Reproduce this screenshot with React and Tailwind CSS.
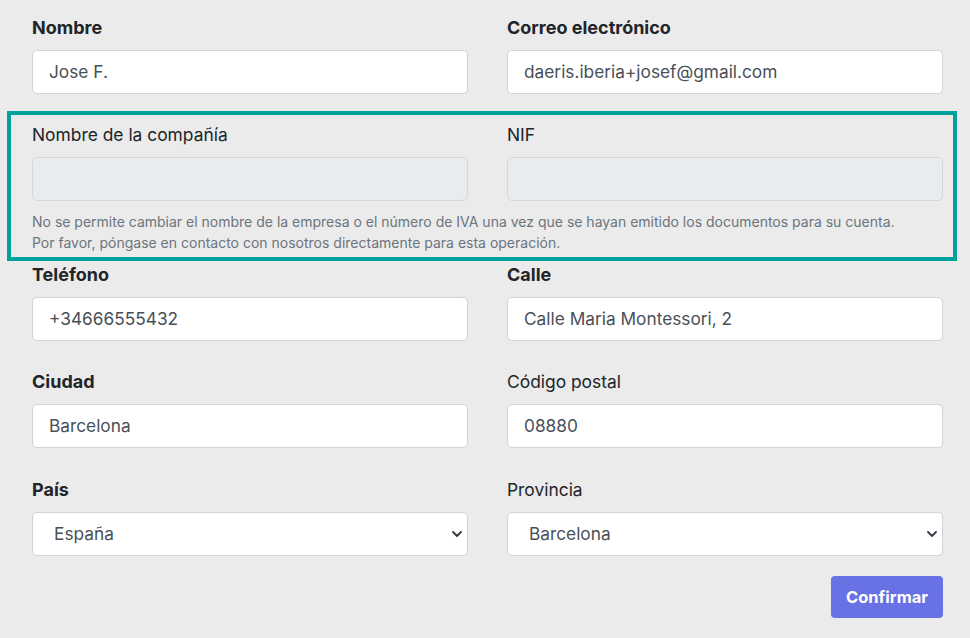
import { ChevronDown } from 'lucide-react';

const font = { fontFamily: 'Inter, "Noto Sans", sans-serif' };

function Field({ label, value, bold, disabled, select }) {
  return (
    <div className="flex flex-col">
      <label
        className={`h-[25px] leading-[25px] text-[#212529] mb-[10px] ${
          bold ? 'font-bold text-[18px]' : 'font-normal text-[17.4px]'
        }`}
      >
        {label}
      </label>
      {select ? (
        <div className="h-[44px] bg-white border border-[#ced4da] rounded-[5px] flex items-center justify-between pl-[21px] pr-[2px] text-[17.3px] text-[#495057]">
          <span>{value}</span>
          <ChevronDown size={16} strokeWidth={2.75} className="text-[#343a40]" />
        </div>
      ) : (
        <div
          className={`h-[44px] border rounded-[5px] flex items-center px-4 text-[17.3px] text-[#495057] ${
            disabled ? 'bg-[#e9ecef] border-[#d4d8dd]' : 'bg-white border-[#ced4da]'
          }`}
        >
          {value}
        </div>
      )}
    </div>
  );
}

export default function App() {
  return (
    <div className="min-h-[638px] bg-[#ebebeb] pl-8 pr-[27px] pt-[15px]" style={font}>
      {/* Nombre / correo */}
      <div className="grid grid-cols-2 gap-x-[39px] mb-[28px]">
        <Field label="Nombre" value="Jose F." bold />
        <Field label="Correo electrónico" value="daeris.iberia+josef@gmail.com" bold />
      </div>

      {/* Datos fiscales, con el recuadro resaltado */}
      <div className="relative mb-[9px]">
        <div className="absolute -left-[25px] -right-[14px] -top-[11px] -bottom-[8px] border-4 border-[#00a19a] pointer-events-none" />
        <div className="grid grid-cols-2 gap-x-[39px]">
          <Field label="Nombre de la compañía" value="" disabled />
          <Field label="NIF" value="" disabled />
        </div>
        <p className="mt-[10px] text-[14px] leading-[21px] text-[#6c757d]">
          No se permite cambiar el nombre de la empresa o el número de IVA una vez que se hayan emitido los documentos para su cuenta.
          <br />
          Por favor, póngase en contacto con nosotros directamente para esta operación.
        </p>
      </div>

      <div className="grid grid-cols-2 gap-x-[39px] mb-[28px]">
        <Field label="Teléfono" value="+34666555432" bold />
        <Field label="Calle" value="Calle Maria Montessori, 2" bold />
      </div>

      <div className="grid grid-cols-2 gap-x-[39px] mb-[29px]">
        <Field label="Ciudad" value="Barcelona" bold />
        <Field label="Código postal" value="08880" />
      </div>

      <div className="grid grid-cols-2 gap-x-[39px]">
        <Field label="País" value="España" bold select />
        <Field label="Provincia" value="Barcelona" select />
      </div>

      <div className="flex justify-end mt-[20px]">
        <button className="w-[112px] h-[42px] rounded-[4px] bg-[#6872e5] text-white font-bold text-[16.5px]">
          Confirmar
        </button>
      </div>
    </div>
  );
}
